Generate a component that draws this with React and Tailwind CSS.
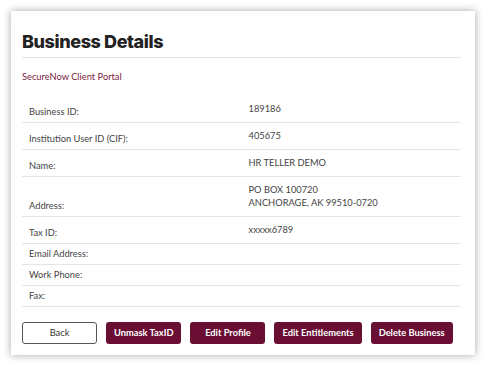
const rows = [
  { label: 'Business ID:', value: ['189186'] },
  { label: 'Institution User ID (CIF):', value: ['405675'] },
  { label: 'Name:', value: ['HR TELLER DEMO'] },
  { label: 'Address:', value: ['PO BOX 100720', 'ANCHORAGE, AK 99510-0720'] },
  { label: 'Tax ID:', value: ['xxxxx6789'] },
  { label: 'Email Address:', value: [] },
  { label: 'Work Phone:', value: [] },
  { label: 'Fax:', value: [] },
];

const actions = ['Unmask TaxID', 'Edit Profile', 'Edit Entitlements', 'Delete Business'];

const App = () => {
  return (
    <div className="w-[486px] h-[366px] bg-white p-[11px] font-['Lato',sans-serif]">
      <div className="w-[464px] h-[344px] bg-white shadow-[0_0_8px_rgba(0,0,0,0.35)] pl-[11px] pr-[14px] pt-[20px]">
        <h1 className="font-['Inter',sans-serif] font-extrabold text-[18px] leading-[22px] text-[#222] tracking-[-0.4px]">
          Business Details
        </h1>
        <div className="mt-[4px] border-b border-[#e3e3e3]" />

        <p className="mt-[13px] text-[9.3px] leading-[11px] text-[#7b1c40]">SecureNow Client Portal</p>

        <div className="mt-[14px] text-[9.3px] text-[#444]">
          {rows.map((row) => (
            <div key={row.label} className="flex items-end border-b border-[#e5e5e5]">
              <div className="w-1/2 px-[7px] py-[5px] leading-[10px]">{row.label}</div>
              <div className="w-1/2 px-[7px] self-start pt-[6px] pb-[7px] leading-[13px]">
                {row.value.map((v) => (
                  <div key={v}>{v}</div>
                ))}
              </div>
            </div>
          ))}
        </div>

        <div className="mt-[15px] flex gap-[9px]">
          <button className="min-w-[75px] h-[22px] px-[8px] rounded-[3px] border border-[#555] bg-white text-[9.3px] text-[#333]">
            Back
          </button>
          {actions.map((a) => (
            <button
              key={a}
              className="min-w-[75px] h-[22px] px-[8px] rounded-[3px] bg-[#6a0f33] text-white text-[9.3px] font-bold"
            >
              {a}
            </button>
          ))}
        </div>
      </div>
    </div>
  );
};

export default App;
